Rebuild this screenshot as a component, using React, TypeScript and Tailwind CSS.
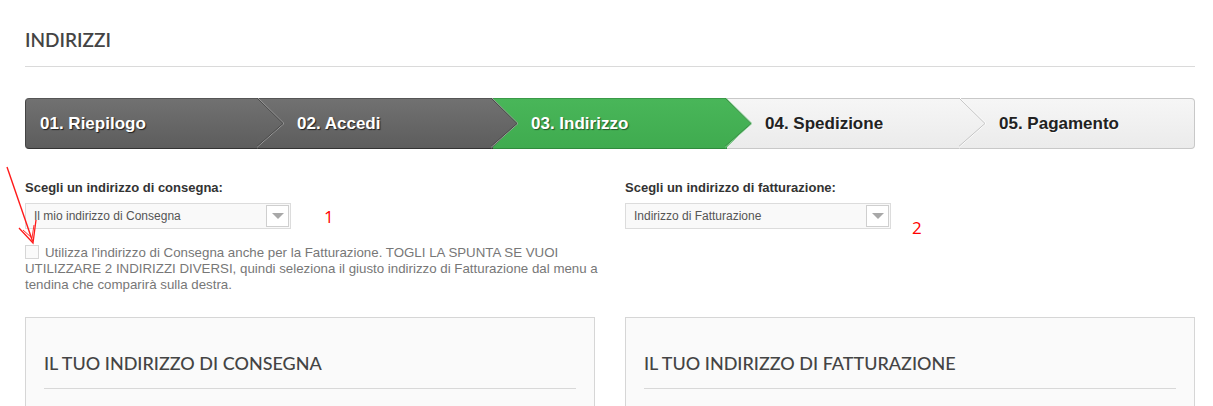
import React from "react";

type Kind = "dark" | "green" | "light";
const steps: { label: string; kind: Kind }[] = [
  { label: "01. Riepilogo", kind: "dark" },
  { label: "02. Accedi", kind: "dark" },
  { label: "03. Indirizzo", kind: "green" },
  { label: "04. Spedizione", kind: "light" },
  { label: "05. Pagamento", kind: "light" },
];

const fills: Record<Kind, { top: string; bottom: string; stroke: string; hi: string }> = {
  dark: { top: "#717171", bottom: "#5d5d5d", stroke: "#4a4a4a", hi: "#a0a0a0" },
  green: { top: "#49b659", bottom: "#3fab4f", stroke: "#3a8f45", hi: "#8fd39a" },
  light: { top: "#f6f6f6", bottom: "#ebebeb", stroke: "#c4c4c4", hi: "#ffffff" },
};

function Chevron({ kind, id }: { kind: Kind; id: string }) {
  const f = fills[kind];
  return (
    <svg className="absolute top-[-1px] right-[-27px] z-10" width="29" height="51" viewBox="0 0 29 51">
      <defs>
        <linearGradient id={id} x1="0" y1="0" x2="0" y2="1">
          <stop offset="0" stopColor={f.top} />
          <stop offset="1" stopColor={f.bottom} />
        </linearGradient>
      </defs>
      <polygon points="0,0 26,25.5 0,51" fill={`url(#${id})`} />
      <polyline points="1,0 27,25.5 -2,51" fill="none" stroke={f.hi} strokeWidth="1" />
      <polyline points="0,0 26,25.5 -3,51" fill="none" stroke={f.stroke} strokeWidth="1" />
    </svg>
  );
}

function StepBar() {
  return (
    <div className="mt-[31px] grid h-[51px] grid-cols-5" style={{ fontFamily: '"Liberation Sans", Arial, sans-serif' }}>
      {steps.map((s, i) => {
        const isFirst = i === 0;
        const isLast = i === steps.length - 1;
        const cls =
          s.kind === "dark"
            ? "bg-gradient-to-b from-[#717171] to-[#5d5d5d] border-t-[#555] border-b-[#333] text-white [text-shadow:1px_1px_1px_rgba(0,0,0,0.7)]"
            : s.kind === "green"
            ? "bg-gradient-to-b from-[#49b659] to-[#3fab4f] border-t-[#3a9a48] border-b-[#2f8a3c] text-white [text-shadow:1px_1px_1px_rgba(0,0,0,0.5)]"
            : "bg-gradient-to-b from-[#f6f6f6] to-[#ebebeb] border-[#c8c8c8] text-[#222] [text-shadow:1px_1px_0_rgba(255,255,255,0.8)]";
        return (
          <div
            key={s.label}
            className={`relative flex min-w-0 items-center border-y ${cls} ${
              isFirst ? "rounded-l-[4px] border-l border-l-[#444]" : ""
            } ${isLast ? "rounded-r-[4px] border-r" : ""}`}
          >
            <span className={`text-[17px] font-bold ${isFirst ? "pl-[14px]" : "pl-[38px]"}`}>{s.label}</span>
            {!isLast && <Chevron kind={s.kind} id={`g${i}`} />}
          </div>
        );
      })}
    </div>
  );
}

function Select({ text }: { text: string }) {
  return (
    <div className="flex h-[26px] w-[266px] items-center justify-between border border-[#dcdcdc] bg-[#f9f9f9] pl-[8px] pr-[1px]">
      <span className="text-[12px] text-[#555]">{text}</span>
      <div className="flex h-[22px] w-[23px] items-center justify-center border border-[#cfcfcf] bg-white">
        <div className="h-0 w-0 border-x-[6px] border-t-[6px] border-x-transparent border-t-[#a8a8a8]" />
      </div>
    </div>
  );
}

export default function App() {
  return (
    <div
      className="relative min-h-[406px] w-[1213px] overflow-hidden bg-white pl-[25px] pr-[18px]"
      style={{ fontFamily: '"Liberation Sans", Arial, sans-serif' }}
    >
      <h1
        className="pt-[29px] text-[19px] font-semibold leading-[22px] text-[#444]"
        style={{ fontFamily: "Lato, sans-serif" }}
      >
        INDIRIZZI
      </h1>
      <div className="mt-[15px] h-px bg-[#dadada]" />

      <StepBar />

      <div className="mt-[31px] grid grid-cols-[570px_570px] gap-x-[30px]">
        <div>
          <div className="text-[13px] font-bold leading-[16px] text-[#333]">Scegli un indirizzo di consegna:</div>
          <div className="mt-[7px] flex items-start">
            <Select text="Il mio indirizzo di Consegna" />
            <span className="ml-[33px] mt-[4px] text-[17px] leading-[20px] text-[#ff0000]" style={{ fontFamily: '"Open Sans", sans-serif' }}>
              1
            </span>
          </div>
          <div className="mt-[16px] w-[578px] text-[13.3px] leading-[16px] text-[#777]">
            <span className="mr-[6px] inline-block h-[14px] w-[14px] border border-[#d6d6d6] bg-[#fafafa] align-[-2px]" />
            Utilizza l'indirizzo di Consegna anche per la Fatturazione. TOGLI LA SPUNTA SE VUOI UTILIZZARE 2 INDIRIZZI DIVERSI, quindi seleziona il giusto indirizzo di Fatturazione dal menu a tendina che comparirà sulla destra.
          </div>
        </div>
        <div>
          <div className="text-[13px] font-bold leading-[16px] text-[#333]">Scegli un indirizzo di fatturazione:</div>
          <div className="mt-[7px] flex items-start">
            <Select text="Indirizzo di Fatturazione" />
            <span className="ml-[21px] mt-[15px] text-[17px] leading-[20px] text-[#ff0000]" style={{ fontFamily: '"Open Sans", sans-serif' }}>
              2
            </span>
          </div>
        </div>
      </div>

      <div className="mt-[24px] grid grid-cols-[570px_570px] gap-x-[30px]">
        {["IL TUO INDIRIZZO DI CONSEGNA", "IL TUO INDIRIZZO DI FATTURAZIONE"].map((t) => (
          <div key={t} className="h-[120px] border border-[#d6d6d6] bg-[#fafafa] px-[18px] pt-[34px]">
            <div className="text-[18px] font-medium leading-[22px] text-[#444]" style={{ fontFamily: "Lato, sans-serif" }}>
              {t}
            </div>
            <div className="mt-[14px] h-px bg-[#d8d8d8]" />
          </div>
        ))}
      </div>

      <svg className="pointer-events-none absolute left-0 top-[160px]" width="50" height="90" viewBox="0 0 50 90">
        <line x1="7" y1="7" x2="32.5" y2="81" stroke="#ff1a1a" strokeWidth="1.4" />
        <polyline points="19,68 33,83 36,60" fill="none" stroke="#ff1a1a" strokeWidth="1.3" />
        <polyline points="23,70 32,78 34,65" fill="none" stroke="#ff1a1a" strokeWidth="0.9" />
      </svg>
    </div>
  );
}
